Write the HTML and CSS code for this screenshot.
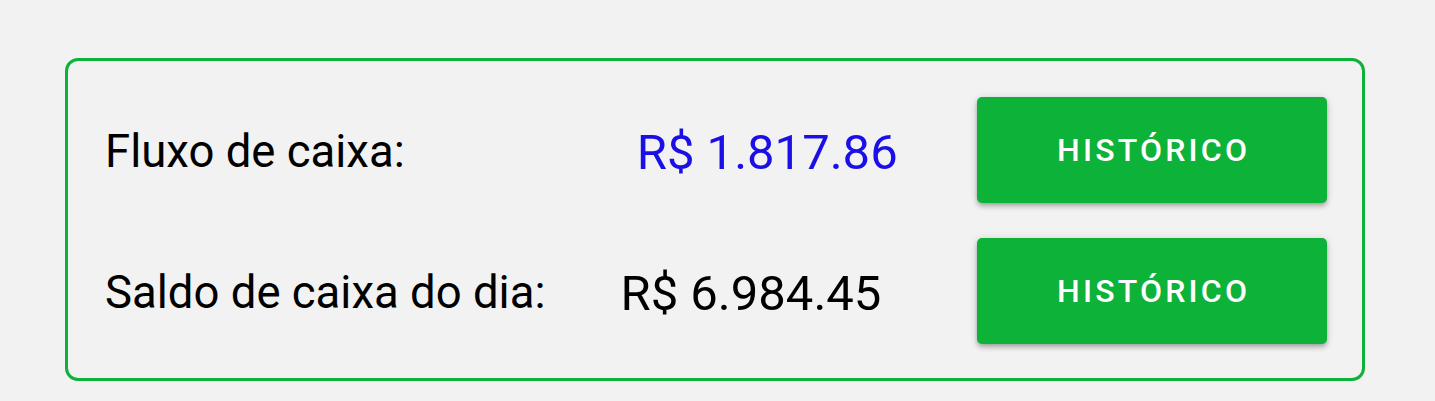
FILE: index.html
```html
<!DOCTYPE html>
<html lang="pt">
<head>
<meta charset="utf-8">
<title>Caixa</title>
<link rel="stylesheet" href="styles.css">
</head>
<body>
<section class="card">
  <div class="row">
    <span class="label">Fluxo de caixa:</span>
    <span class="value value--flow">R$ 1.817.86</span>
    <button class="btn" type="button">HISTÓRICO</button>
  </div>
  <div class="row">
    <span class="label">Saldo de caixa do dia:</span>
    <span class="value value--balance">R$ 6.984.45</span>
    <button class="btn" type="button">HISTÓRICO</button>
  </div>
</section>
</body>
</html>
```
FILE: styles.css
```css
html, body {
  margin: 0;
  padding: 0;
  background: #f2f2f2;
}
body {
  font-family: Roboto, "Liberation Sans", sans-serif;
  padding: 58px 70px 20px 65px;
}
.card {
  width: 1300px;
  box-sizing: border-box;
  border: 3px solid #0db238;
  border-radius: 13px;
  padding: 36px 35px 34px 37px;
  display: flex;
  flex-direction: column;
  gap: 35px;
}
.row {
  display: flex;
  align-items: center;
  height: 106px;
}
.label {
  font-size: 45.5px;
  line-height: 54px;
  padding-top: 3px;
  color: #000;
  white-space: nowrap;
}
.value {
  font-size: 49px;
  line-height: 58px;
  padding-top: 5px;
  color: #000;
  white-space: nowrap;
}
.value--flow {
  margin-left: 232px;
  color: #1a0fe6;
}
.value--balance {
  margin-left: 75px;
}
.btn {
  margin-left: auto;
  width: 350px;
  height: 106px;
  border: none;
  border-radius: 5px;
  background: #0db238;
  color: #fff;
  font-family: Roboto, "Liberation Sans", sans-serif;
  font-weight: 500;
  font-size: 32px;
  letter-spacing: 0.1em;
  padding: 0 0 0 0.1em;
  box-shadow: 0 2px 4px -1px rgba(0,0,0,0.2), 0 4px 5px 0 rgba(0,0,0,0.14), 0 1px 10px 0 rgba(0,0,0,0.12);
  cursor: pointer;
}
```
